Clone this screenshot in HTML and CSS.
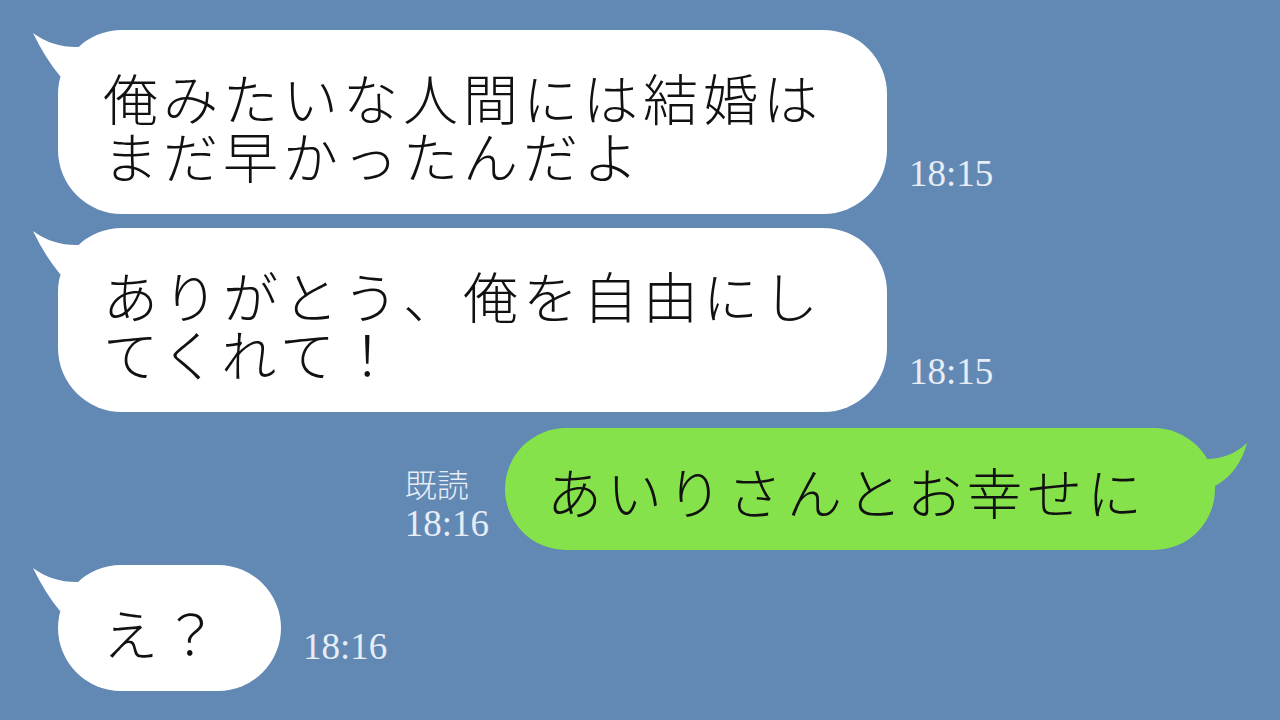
FILE: index.html
```html
<!DOCTYPE html>
<html>
<head>
    <meta charset="UTF-8">
    <title>トーク</title>
    <link rel="stylesheet" href="styles.css">
</head>
<body>
    <div class="chat">
        <div class="row left">
            <div class="bubble">
                <svg class="tail" width="50" height="50" viewBox="0 0 50 50"><path d="M0 3 Q20 18 47 17 L47 50 L27 46 Q12 28 0 3 Z"/></svg>
                俺みたいな人間には結婚は<br>まだ早かったんだよ
            </div>
            <div class="meta">18:15</div>
        </div>
        <div class="row left">
            <div class="bubble">
                <svg class="tail" width="50" height="50" viewBox="0 0 50 50"><path d="M0 3 Q20 18 47 17 L47 50 L27 46 Q12 28 0 3 Z"/></svg>
                ありがとう、俺を自由にし<br>てくれて！
            </div>
            <div class="meta">18:15</div>
        </div>
        <div class="row right">
            <div class="meta">
                <span class="read">既読</span>
                18:16
            </div>
            <div class="bubble green">
                <svg class="tail" width="50" height="64" viewBox="0 0 50 64"><path d="M48 15 Q30 32 4 31 L4 62 L16 58 Q40 45 48 15 Z"/></svg>
                あいりさんとお幸せに
            </div>
        </div>
        <div class="row left">
            <div class="bubble short">
                <svg class="tail" width="50" height="50" viewBox="0 0 50 50"><path d="M0 3 Q20 18 47 17 L47 50 L27 46 Q12 28 0 3 Z"/></svg>
                え？
            </div>
            <div class="meta">18:16</div>
        </div>
    </div>
</body>
</html>
```

FILE: styles.css
```css
html,
body {
    margin: 0;
    padding: 0;
}
body {
    background: #6288b4;
    width: 1280px;
    height: 720px;
    overflow: hidden;
    font-family: "Noto Sans CJK JP", sans-serif;
}
.chat {
    padding-top: 30px;
}
.row {
    display: flex;
    align-items: flex-end;
}
.row.left {
    padding-left: 58px;
}
.row.right {
    justify-content: flex-end;
    padding-right: 65px;
}
.row + .row {
    margin-top: 14px;
}
.row.right {
    margin-top: 16px;
}
.row.right + .row {
    margin-top: 15px;
}
.bubble {
    position: relative;
    background: #fff;
    color: #111;
    font-size: 55px;
    font-weight: 300;
    letter-spacing: 5px;
    line-height: 58px;
    white-space: nowrap;
    padding: 37px 64px 31px 45px;
    border-radius: 64px;
}
.bubble.short {
    padding-right: 58px;
}
.bubble.green {
    background: #85e24a;
    padding: 33px 68px 31px 42px;
}
.tail {
    position: absolute;
    left: -25px;
    top: 0;
    fill: #fff;
}
.green .tail {
    left: auto;
    right: -34px;
    fill: #85e24a;
}
.meta {
    color: #e6edf5;
    font-family: "Liberation Serif", serif;
    font-size: 37px;
    line-height: 40px;
    margin: 0 0 20px 22px;
}
.row.left:last-child .meta {
    margin-bottom: 24px;
}
.right .meta {
    margin: 0 16px 6px 0;
}
.read {
    display: block;
    font-family: "Noto Sans CJK JP", sans-serif;
    font-size: 32px;
    font-weight: 300;
    line-height: 42px;
}
```
